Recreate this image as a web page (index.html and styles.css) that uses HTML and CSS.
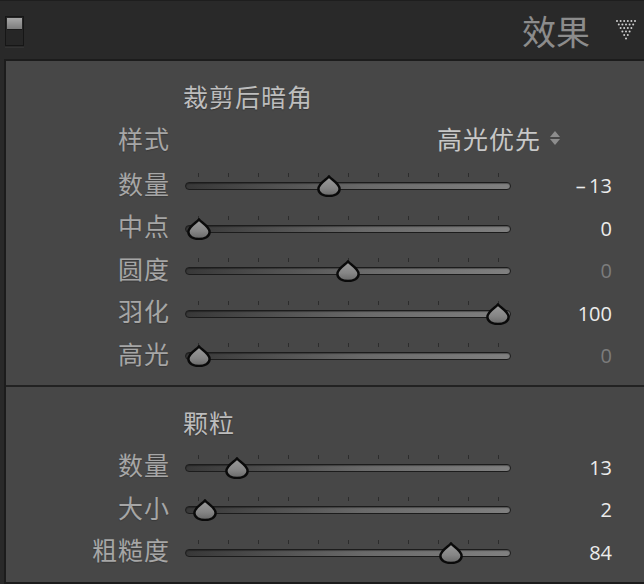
FILE: index.html
```html
<!DOCTYPE html>
<html lang="zh">
<head>
<meta charset="utf-8">
<title>效果</title>
<link rel="stylesheet" href="styles.css">
</head>
<body>
<div class="header">
  <svg class="toggle" width="20" height="32" viewBox="0 0 20 32">
    <defs>
      <linearGradient id="tg" x1="0" y1="0" x2="0" y2="1">
        <stop offset="0" stop-color="#a8a8a8"/>
        <stop offset="1" stop-color="#7c7c7c"/>
      </linearGradient>
    </defs>
    <rect x="0.5" y="0.5" width="18" height="29" fill="#262626" stroke="#161616"/>
    <rect x="2" y="2" width="15" height="11" fill="url(#tg)"/>
    <rect x="2" y="13" width="15" height="1" fill="#1a1a1a"/>
    <rect x="0" y="31" width="19" height="1" fill="#333"/>
  </svg>
  <div class="title">效果</div>
  <svg class="dots" width="22" height="22" viewBox="0 0 22 22">
    <g fill="#d0d0d0">
      <circle cx="2" cy="2" r="1"/><circle cx="5.6" cy="2" r="1"/><circle cx="9.2" cy="2" r="1"/><circle cx="12.8" cy="2" r="1"/><circle cx="16.4" cy="2" r="1"/><circle cx="20" cy="2" r="1"/>
      <circle cx="3.8" cy="5.5" r="1"/><circle cx="7.4" cy="5.5" r="1"/><circle cx="11" cy="5.5" r="1"/><circle cx="14.6" cy="5.5" r="1"/><circle cx="18.2" cy="5.5" r="1"/>
      <circle cx="5.6" cy="9" r="1"/><circle cx="9.2" cy="9" r="1"/><circle cx="12.8" cy="9" r="1"/><circle cx="16.4" cy="9" r="1"/>
      <circle cx="7.4" cy="12.5" r="1"/><circle cx="11" cy="12.5" r="1"/><circle cx="14.6" cy="12.5" r="1"/>
      <circle cx="9.2" cy="16" r="1"/><circle cx="12.8" cy="16" r="1"/>
      <circle cx="11" cy="19.5" r="1"/>
    </g>
  </svg>
</div>

<svg width="0" height="0" class="defs">
  <defs>
    <linearGradient id="thumbg" x1="0" y1="0" x2="0" y2="1">
      <stop offset="0" stop-color="#9c9c9c"/>
      <stop offset="0.6" stop-color="#858585"/>
      <stop offset="1" stop-color="#686868"/>
    </linearGradient>
    <symbol id="thumb" viewBox="0 0 24 22">
      <path d="M12 1.3 C13.8 4.3 22.6 8.3 22.6 14 C22.6 18.6 17.6 21 12 21 C6.4 21 1.4 18.6 1.4 14 C1.4 8.3 10.2 4.3 12 1.3 Z" fill="url(#thumbg)" stroke="#0a0a0a" stroke-width="2.4" stroke-linejoin="round"/>
    </symbol>
  </defs>
</svg>

<div class="panel">
  <section class="section vignette">
    <div class="section-title">裁剪后暗角</div>
    <div class="row style-row">
      <div class="label">样式</div>
      <div class="select">
        <span>高光优先</span>
        <svg class="updown" width="12" height="16" viewBox="0 0 12 16">
          <path d="M6 1 L11 7 L1 7 Z" fill="#8d8d8d"/>
          <path d="M1 9 L11 9 L6 15 Z" fill="#8d8d8d"/>
        </svg>
      </div>
    </div>

    <div class="row">
      <div class="label">数量</div>
      <div class="slider"><div class="ticks"></div><div class="track"></div><svg class="thumb" style="left:132px" width="24" height="22"><use href="#thumb"/></svg></div>
      <div class="value">–&#8201;13</div>
    </div>
    <div class="row">
      <div class="label">中点</div>
      <div class="slider"><div class="ticks"></div><div class="track"></div><svg class="thumb" style="left:2px" width="24" height="22"><use href="#thumb"/></svg></div>
      <div class="value">0</div>
    </div>
    <div class="row">
      <div class="label">圆度</div>
      <div class="slider"><div class="ticks"></div><div class="track"></div><svg class="thumb" style="left:151px" width="24" height="22"><use href="#thumb"/></svg></div>
      <div class="value dim">0</div>
    </div>
    <div class="row">
      <div class="label">羽化</div>
      <div class="slider"><div class="ticks"></div><div class="track"></div><svg class="thumb" style="left:301px" width="24" height="22"><use href="#thumb"/></svg></div>
      <div class="value">100</div>
    </div>
    <div class="row">
      <div class="label">高光</div>
      <div class="slider"><div class="ticks"></div><div class="track"></div><svg class="thumb" style="left:2px" width="24" height="22"><use href="#thumb"/></svg></div>
      <div class="value dim">0</div>
    </div>
  </section>

  <section class="section grain">
    <div class="section-title">颗粒</div>
    <div class="row">
      <div class="label">数量</div>
      <div class="slider"><div class="ticks"></div><div class="track"></div><svg class="thumb" style="left:40px" width="24" height="22"><use href="#thumb"/></svg></div>
      <div class="value">13</div>
    </div>
    <div class="row">
      <div class="label">大小</div>
      <div class="slider"><div class="ticks"></div><div class="track"></div><svg class="thumb" style="left:8px" width="24" height="22"><use href="#thumb"/></svg></div>
      <div class="value">2</div>
    </div>
    <div class="row">
      <div class="label">粗糙度</div>
      <div class="slider"><div class="ticks"></div><div class="track"></div><svg class="thumb" style="left:254px" width="24" height="22"><use href="#thumb"/></svg></div>
      <div class="value">84</div>
    </div>
  </section>
</div>
</body>
</html>
```

FILE: styles.css
```css
html, body {
  margin: 0;
  padding: 0;
}
body {
  width: 644px;
  height: 584px;
  overflow: hidden;
  background: #292929;
  font-family: "Noto Sans CJK SC", "Noto Sans", sans-serif;
}
.defs {
  position: absolute;
  width: 0;
  height: 0;
}
.header {
  height: 59px;
  border-top: 1px solid #1e1e1e;
  display: flex;
  align-items: center;
  padding-left: 5px;
  padding-right: 7px;
  box-sizing: border-box;
  background: #292929;
}
.toggle {
  display: block;
  margin-top: 3px;
}
.title {
  margin-left: auto;
  font-size: 34px;
  line-height: 1;
  color: #8c8c8c;
  letter-spacing: 0;
  margin-right: 25px;
  margin-top: 2px;
}
.dots {
  display: block;
  margin-top: 0;
}
.panel {
  margin-left: 4px;
  border-left: 2px solid #1c1c1c;
  border-top: 2px solid #1c1c1c;
  border-bottom: 2px solid #1c1c1c;
  background: #474747;
  height: 521px;
}
.section {
  display: flex;
  flex-direction: column;
}
.vignette {
  padding-top: 14px;
  padding-bottom: 10px;
  border-bottom: 2px solid #222;
}
.grain {
  padding-top: 13px;
}
.section-title {
  height: 42px;
  display: flex;
  align-items: center;
  padding-left: 177px;
  font-size: 25px;
  letter-spacing: 1px;
  color: #bdbdbd;
  text-shadow: 0 1px 1px rgba(0,0,0,0.25);
}
.grain .section-title {
  height: 44px;
}
.row {
  height: 42.5px;
  display: flex;
  align-items: center;
}
.style-row {
  height: 42px;
  margin-bottom: 3px;
}
.label {
  width: 164px;
  flex: none;
  text-align: right;
  font-size: 25px;
  line-height: 1;
  letter-spacing: 1px;
  color: #a6a6a6;
  text-shadow: 0 1px 1px rgba(0,0,0,0.2);
}
.select {
  flex: 1;
  display: flex;
  justify-content: flex-end;
  align-items: center;
  padding-right: 83px;
  font-size: 25px;
  line-height: 1;
  letter-spacing: 1px;
  color: #c8c8c8;
}
.updown {
  display: block;
  margin-left: 8px;
}
.slider {
  position: relative;
  width: 326px;
  height: 24px;
  margin-left: 15px;
  margin-top: 4px;
  flex: none;
}
.ticks {
  position: absolute;
  left: 13px;
  top: 0;
  width: 301px;
  height: 4px;
  background: repeating-linear-gradient(to right, #2c2c2c 0 1px, transparent 1px 30px);
}
.track {
  position: absolute;
  left: 0;
  right: 0;
  top: 9px;
  height: 8px;
  box-sizing: border-box;
  border: 1.5px solid #1c1c1c;
  border-radius: 4px;
  background: linear-gradient(to right, #383838, #6a6a6a 55%, #808080);
  box-shadow: inset 0 1px 1px rgba(0,0,0,0.35);
}
.thumb {
  position: absolute;
  top: 2px;
  display: block;
}
.value {
  width: 101px;
  flex: none;
  text-align: right;
  font-family: "Open Sans", "Noto Sans", sans-serif;
  font-size: 20px;
  line-height: 1;
  color: #ececec;
  margin-top: 6px;
}
.value.dim {
  color: #7c7c7c;
}
```
